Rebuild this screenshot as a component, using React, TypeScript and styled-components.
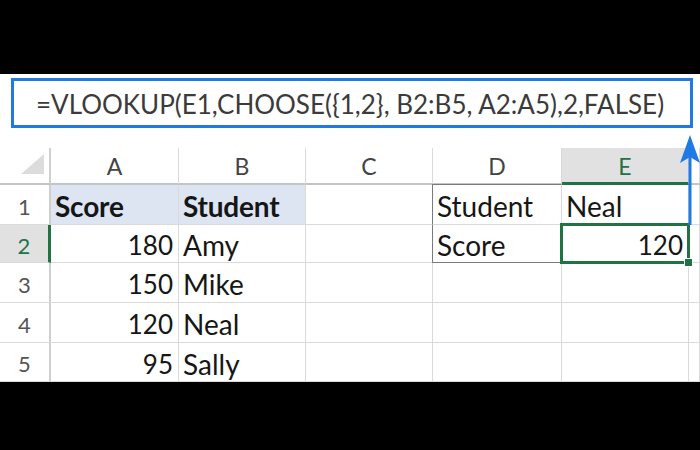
import React from 'react';
import styled, { createGlobalStyle, css } from 'styled-components';

const Global = createGlobalStyle`
  html, body { margin: 0; padding: 0; background: #000; }
  body { width: 700px; height: 450px; overflow: hidden; font-family: Lato, "Open Sans", sans-serif; }
  * { box-sizing: border-box; }
`;

const GREEN = '#217346';
const BLUE = '#1f7be3';
const GRID = '#dadada';

const Page = styled.div`
  width: 700px;
  height: 450px;
  background: #000;
  padding-top: 74px;
`;

const Canvas = styled.div`
  position: relative;
  height: 308px;
  background: #fff;
  display: flex;
  flex-direction: column;
  overflow: hidden;
`;

const FormulaBar = styled.div`
  margin: 4px 0 0 11px;
  width: 682px;
  height: 50px;
  border: 3px solid ${BLUE};
  display: flex;
  align-items: center;
  padding: 1px 0 0 22px;
  font-size: 26px;
  color: #3b3b3b;
  white-space: nowrap;
`;

const Sheet = styled.div`
  margin-top: 20px;
  display: grid;
  grid-template-columns: 51px 128px 127px 127px 129px 127px 11px;
  grid-template-rows: 37px 40px 38px 40px 40px 39px;
`;

const Corner = styled.div`
  position: relative;
  border-right: 2px solid #cfcfcf;
  border-bottom: 2px solid #c4c4c4;
  display: flex;
  align-items: flex-end;
  justify-content: flex-end;
  padding: 0 5px 9px 0;
`;

const ColHeader = styled.div<{ $active?: boolean }>`
  display: flex;
  align-items: center;
  justify-content: center;
  padding-top: 1px;
  font-size: 23px;
  color: #444;
  border-right: 1px solid ${GRID};
  border-bottom: 2px solid #c4c4c4;
  ${(p) =>
    p.$active &&
    css`
      background: #e1e1e1;
      color: ${GREEN};
      border-bottom: 3px solid ${GREEN};
    `}
`;

const RowHeader = styled.div<{ $active?: boolean }>`
  display: flex;
  align-items: center;
  justify-content: center;
  padding: 3px 0 0 0;
  font-size: 22px;
  color: #555;
  border-right: 2px solid #cfcfcf;
  border-bottom: 1px solid ${GRID};
  ${(p) =>
    p.$active &&
    css`
      background: #e1e1e1;
      color: ${GREEN};
      border-right: 3px solid ${GREEN};
    `}
`;

type Edge = { top?: boolean; left?: boolean; bottom?: boolean };

const Cell = styled.div<{
  $right?: boolean;
  $bold?: boolean;
  $fill?: boolean;
  $box?: Edge;
}>`
  position: relative;
  display: flex;
  align-items: center;
  justify-content: ${(p) => (p.$right ? 'flex-end' : 'flex-start')};
  padding: 3px 5px 0 4px;
  font-size: ${(p) => (p.$right ? '26px' : '28px')};
  font-weight: ${(p) => (p.$bold ? 700 : 400)};
  letter-spacing: ${(p) => (p.$bold ? '-0.2px' : '0')};
  color: #161616;
  white-space: nowrap;
  background: ${(p) => (p.$fill ? '#dde5f3' : '#fff')};
  border-right: 1px solid ${GRID};
  border-bottom: 1px solid ${GRID};
  ${(p) => p.$box?.left && css`border-left: 1px solid #7a7a7a; margin-left: -1px;`}
  ${(p) => p.$box?.top && css`border-top: 1px solid #7a7a7a; margin-top: -1px;`}
  ${(p) => p.$box?.bottom && css`border-bottom: 1px solid #7a7a7a;`}
`;

const Selection = styled.div`
  position: absolute;
  z-index: 2;
  left: -2px;
  top: -2px;
  right: -2px;
  bottom: -2px;
  border: 3px solid ${GREEN};
  pointer-events: none;
`;

const FillHandle = styled.div`
  position: absolute;
  right: -6px;
  bottom: -6px;
  width: 9px;
  height: 9px;
  background: ${GREEN};
  border: 1px solid #fff;
`;

const Arrow = styled.svg`
  position: absolute;
  z-index: 3;
  left: 679px;
  top: 61px;
`;

type CellData = {
  v?: string;
  right?: boolean;
  bold?: boolean;
  fill?: boolean;
  box?: Edge;
  selected?: boolean;
};

const rows: CellData[][] = [
  [
    { v: 'Score', bold: true, fill: true },
    { v: 'Student', bold: true, fill: true },
    {},
    { v: 'Student', box: { left: true, top: true } },
    { v: 'Neal' },
    {},
  ],
  [
    { v: '180', right: true },
    { v: 'Amy' },
    {},
    { v: 'Score', box: { left: true, bottom: true } },
    { v: '120', right: true, selected: true },
    {},
  ],
  [{ v: '150', right: true }, { v: 'Mike' }, {}, {}, {}, {}],
  [{ v: '120', right: true }, { v: 'Neal' }, {}, {}, {}, {}],
  [{ v: '95', right: true }, { v: 'Sally' }, {}, {}, {}, {}],
];

const cols = ['A', 'B', 'C', 'D', 'E', ''];

export default function App() {
  return (
    <>
      <Global />
      <Page>
        <Canvas>
          <FormulaBar>=VLOOKUP(E1,CHOOSE({'{'}1,2{'}'}, B2:B5, A2:A5),2,FALSE)</FormulaBar>
          <Sheet>
            <Corner>
              <svg width="23" height="20" viewBox="0 0 23 20">
                <polygon points="0,20 23,20 23,0" fill="#dcdcdc" />
              </svg>
            </Corner>
            {cols.map((c) => (
              <ColHeader key={c || 'F'} $active={c === 'E'}>
                {c}
              </ColHeader>
            ))}
            {rows.map((r, i) => (
              <React.Fragment key={i}>
                <RowHeader $active={i === 1}>{i + 1}</RowHeader>
                {r.map((cell, j) => (
                  <Cell
                    key={j}
                    $right={cell.right}
                    $bold={cell.bold}
                    $fill={cell.fill}
                    $box={cell.box}
                  >
                    {cell.v}
                    {cell.selected && (
                      <Selection>
                        <FillHandle />
                      </Selection>
                    )}
                  </Cell>
                ))}
              </React.Fragment>
            ))}
          </Sheet>
          <Arrow width="22" height="90" viewBox="0 0 22 90">
            <line x1="11" y1="14" x2="11" y2="90" stroke={BLUE} strokeWidth="3" />
            <polygon points="11,0 21,28 11,22 1,28" fill={BLUE} />
          </Arrow>
        </Canvas>
      </Page>
    </>
  );
}
